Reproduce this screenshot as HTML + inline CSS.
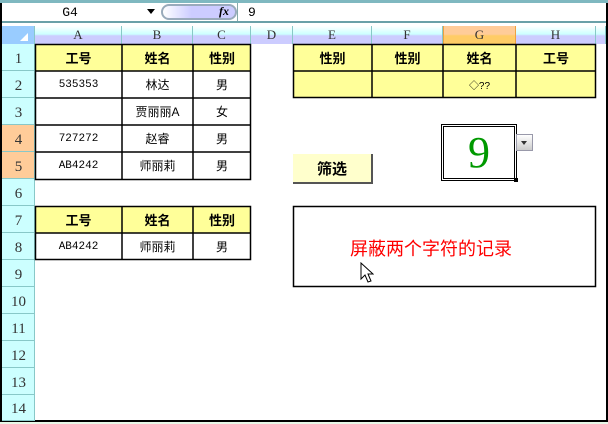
<!DOCTYPE html>
<html><head><meta charset="utf-8"><style>
*{margin:0;padding:0;box-sizing:border-box}
body{width:608px;height:424px;position:relative;overflow:hidden;background:#e8f8e8;font-family:"Liberation Sans","Noto Sans CJK SC",sans-serif}
.a{position:absolute}
.c{position:absolute;display:flex;align-items:center;justify-content:center;font-size:12px;color:#000}
.h{font-weight:bold;font-size:13px}
.mono{font-family:"Liberation Mono","Noto Sans CJK SC",monospace;font-size:11px}
.rh{position:absolute;left:2px;width:33px;height:27px;background:#ccffff;border-bottom:1px solid #88c8c8;display:flex;align-items:flex-end;justify-content:center;font-family:"Liberation Serif",serif;font-size:15px;color:#333;padding-bottom:2px}
.ch{position:absolute;top:26px;height:18px;border-right:1px solid #88c8c8;background:linear-gradient(#fff 0,#ccffff 45%,#ccccff 55%,#ccccff 100%);font-family:"Liberation Serif",serif;font-size:13px;color:#333;display:flex;justify-content:center;align-items:center}
</style></head><body>
<div class="a" style="left:0;top:0;width:608px;height:424px;background:#fff;border-left:2px solid #000;border-right:2px solid #000;border-bottom:2px solid #000;height:422px"></div>
<div class="a" style="left:0;top:0;width:608px;height:3px;background:#7fb8c0"></div>
<div class="a" style="left:2px;top:21px;width:604px;height:2px;background:#6aa0a8"></div>
<div class="a" style="left:2px;top:23px;width:604px;height:3px;background:#fff"></div>
<div class="c mono" style="left:40px;top:3px;width:60px;height:18px;font-size:13px">G4</div>
<div class="a" style="left:147px;top:9px;border-left:4px solid transparent;border-right:4px solid transparent;border-top:5px solid #000"></div>
<div class="a" style="left:161px;top:4px;width:76px;height:16px;border:2px solid #9ab;border-radius:8px;background:linear-gradient(90deg,#fff,#ccccff 40%,#ccccff)"></div>
<div class="a" style="left:219px;top:4px;font-family:'Liberation Serif',serif;font-style:italic;font-size:12px;font-weight:bold">fx</div>
<div class="a" style="left:237px;top:3px;width:1px;height:18px;background:#8aa"></div>
<div class="a mono" style="left:248px;top:5px;font-size:13px">9</div>
<!-- col headers -->
<div class="a" style="left:2px;top:26px;width:33px;height:18px;background:#99ccff;border-right:1px solid #88c8c8"></div>
<div class="a" style="left:20px;top:33px;border-left:8px solid transparent;border-bottom:8px solid #fff"></div>
<div class="ch" style="left:35px;width:87px">A</div>
<div class="ch" style="left:122px;width:71px">B</div>
<div class="ch" style="left:193px;width:58px">C</div>
<div class="ch" style="left:251px;width:42px">D</div>
<div class="ch" style="left:293px;width:79px">E</div>
<div class="ch" style="left:372px;width:71px">F</div>
<div class="ch" style="left:443px;width:73px;background:linear-gradient(#ffcc99 0,#ffcc99 45%,#ffcc66 55%);border-left:1px solid #f0a040;border-right:1px solid #f0a040">G</div>
<div class="ch" style="left:516px;width:80px">H</div>
<div class="ch" style="left:596px;width:10px"></div>
<!-- row headers -->
<div class="rh" style="top:44px">1</div><div class="rh" style="top:71px">2</div><div class="rh" style="top:98px">3</div>
<div class="rh" style="top:125px;background:#ffcc99">4</div><div class="rh" style="top:152px;background:#ffcc99">5</div>
<div class="rh" style="top:179px">6</div><div class="rh" style="top:206px">7</div><div class="rh" style="top:233px">8</div>
<div class="rh" style="top:260px">9</div><div class="rh" style="top:287px">10</div><div class="rh" style="top:314px">11</div>
<div class="rh" style="top:341px">12</div><div class="rh" style="top:368px">13</div><div class="rh" style="top:395px;height:26px">14</div>
<div class="a" style="left:34px;top:44px;width:1px;height:377px;background:#88c8c8"></div>
<!-- table 1 -->
<div class="a" style="left:35px;top:44px;width:216px;height:27px;background:#ffff99"></div>
<svg class="a" style="left:0;top:0" width="608" height="424">
<g stroke="#000" stroke-width="1.5" fill="none">
<rect x="35.5" y="44.5" width="215" height="135"/>
<path d="M122 44V180M193 44V180M35 71H251M35 98H251M35 125H251M35 152H251"/>
</g></svg>
<div class="c h" style="left:35px;top:44px;width:87px;height:27px">工号</div>
<div class="c h" style="left:122px;top:44px;width:71px;height:27px">姓名</div>
<div class="c h" style="left:193px;top:44px;width:58px;height:27px">性别</div>
<div class="c mono" style="left:35px;top:71px;width:87px;height:27px">535353</div><div class="c" style="left:122px;top:71px;width:71px;height:27px">林达</div><div class="c" style="left:193px;top:71px;width:58px;height:27px">男</div>
<div class="c" style="left:122px;top:98px;width:71px;height:27px">贾丽丽A</div><div class="c" style="left:193px;top:98px;width:58px;height:27px">女</div>
<div class="c mono" style="left:35px;top:125px;width:87px;height:27px">727272</div><div class="c" style="left:122px;top:125px;width:71px;height:27px">赵睿</div><div class="c" style="left:193px;top:125px;width:58px;height:27px">男</div>
<div class="c mono" style="left:35px;top:152px;width:87px;height:27px">AB4242</div><div class="c" style="left:122px;top:152px;width:71px;height:27px">师丽莉</div><div class="c" style="left:193px;top:152px;width:58px;height:27px">男</div>
<!-- table 2 -->
<div class="a" style="left:35px;top:206px;width:216px;height:27px;background:#ffff99"></div>
<!-- right table -->
<div class="a" style="left:293px;top:44px;width:303px;height:54px;background:#ffff99"></div>
<svg class="a" style="left:0;top:0" width="608" height="424">
<g stroke="#000" stroke-width="1.5" fill="none">
<rect x="35.5" y="206.5" width="215" height="53"/>
<path d="M122 206V260M193 206V260M35 233H251"/>
<rect x="293.5" y="44.5" width="302" height="53"/>
<path d="M372 44V98M443 44V98M516 44V98M293 71H596"/>
<rect x="293.5" y="206.5" width="302" height="80"/>
</g></svg>
<div class="c h" style="left:35px;top:206px;width:87px;height:27px">工号</div>
<div class="c h" style="left:122px;top:206px;width:71px;height:27px">姓名</div>
<div class="c h" style="left:193px;top:206px;width:58px;height:27px">性别</div>
<div class="c mono" style="left:35px;top:233px;width:87px;height:27px">AB4242</div><div class="c" style="left:122px;top:233px;width:71px;height:27px">师丽莉</div><div class="c" style="left:193px;top:233px;width:58px;height:27px">男</div>
<div class="c h" style="left:293px;top:44px;width:79px;height:27px">性别</div>
<div class="c h" style="left:372px;top:44px;width:71px;height:27px">性别</div>
<div class="c h" style="left:443px;top:44px;width:73px;height:27px">姓名</div>
<div class="c h" style="left:516px;top:44px;width:80px;height:27px">工号</div>
<div class="c" style="left:443px;top:71px;width:73px;height:27px;font-size:10px">◇??</div>
<!-- button -->
<div class="c" style="left:293px;top:154px;width:80px;height:30px;background:#ffffcc;border-right:2px solid #555;border-bottom:2px solid #555;font-weight:bold;font-size:15px">筛选</div>
<!-- 9 box -->
<div class="a" style="left:441px;top:124px;width:76px;height:57px;border:1px solid #000;padding:1px"><div style="width:100%;height:100%;border:1px solid #000"></div></div>
<div class="c" style="left:441px;top:124px;width:76px;height:57px;font-family:'Liberation Serif',serif;font-size:44px;color:#090">9</div>
<div class="a" style="left:514px;top:178px;width:4px;height:4px;background:#000"></div>
<div class="a" style="left:516px;top:134px;width:17px;height:17px;border:1px solid #99a;background:linear-gradient(#fff,#ccc)"></div>
<div class="a" style="left:521px;top:141px;border-left:3px solid transparent;border-right:3px solid transparent;border-top:4px solid #333"></div>
<div class="a" style="left:350px;top:235px;font-size:18px;color:#f00;white-space:nowrap;font-family:'Noto Sans CJK SC',sans-serif">屏蔽两个字符的记录</div>
<svg class="a" style="left:360px;top:262px" width="14" height="22"><path d="M1 1V17L5 13L8 20L11 19L8 12H13Z" fill="#fff" stroke="#000" stroke-width="1"/></svg>
</body></html>
